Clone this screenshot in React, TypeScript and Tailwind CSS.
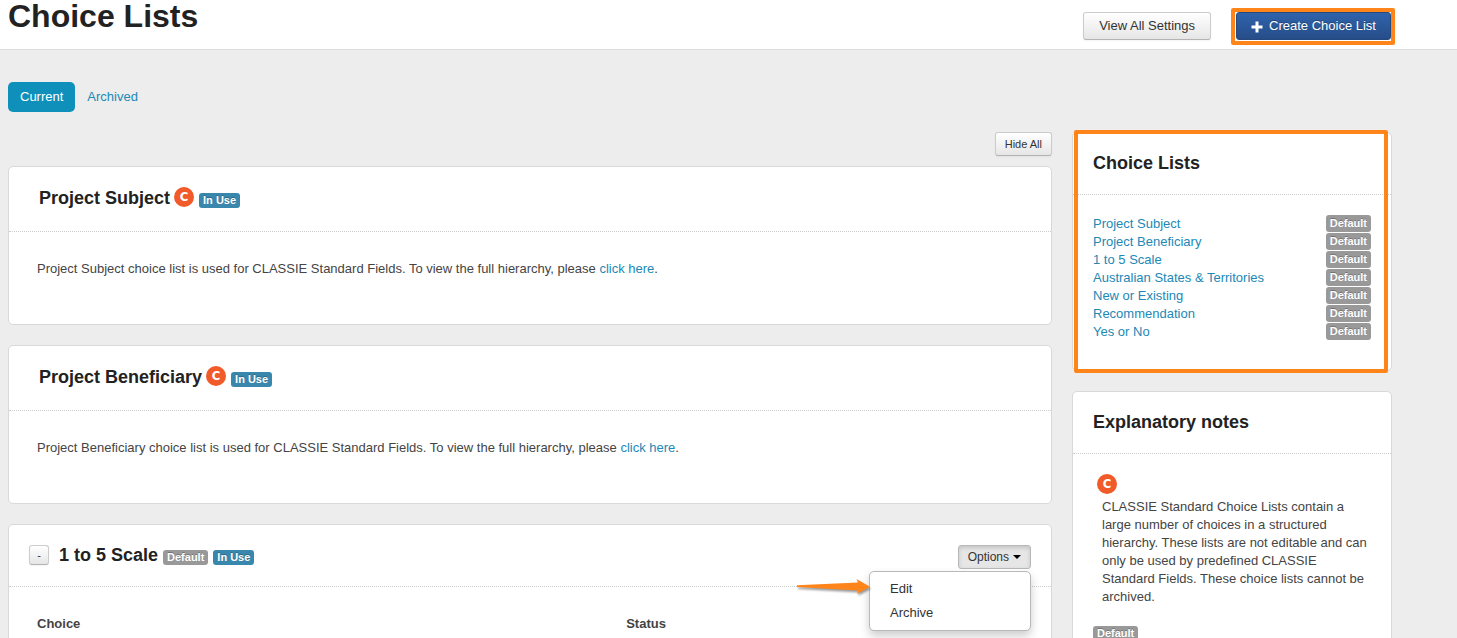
import { ReactNode } from 'react';
import clsx from 'clsx';

const choiceLists = [
  'Project Subject',
  'Project Beneficiary',
  '1 to 5 Scale',
  'Australian States & Territories',
  'New or Existing',
  'Recommendation',
  'Yes or No'
];

const linkClass = 'text-[#2288b5] hover:underline';
const buttonClass =
  'rounded-[3px] border border-[#ccc] border-b-[#b3b3b3] bg-linear-to-b from-white to-[#e6e6e6] text-[#333] shadow-xs';

function Badge({ tone = 'gray', className, children }: { tone?: 'gray' | 'blue'; className?: string; children: ReactNode }) {
  return (
    <span
      className={clsx(
        'inline-block rounded-[3px] px-1 text-[11px] font-bold text-white [text-shadow:0_-1px_0_rgba(0,0,0,0.25)]',
        tone === 'blue' ? 'bg-[#3a87ad]' : 'bg-[#999]',
        className ?? 'leading-[15px]'
      )}
    >
      {children}
    </span>
  );
}

function ClassieIcon() {
  return (
    <span className="flex size-5 items-center justify-center rounded-full bg-[#f15a29] font-['Liberation_Sans_Narrow','DejaVu_Sans_Condensed',sans-serif] text-[13px] leading-5 font-bold text-white">
      C
    </span>
  );
}

function Card({ children }: { children: ReactNode }) {
  return <section className="rounded-[5px] border border-[#d9d9d9] bg-white">{children}</section>;
}

function StandardList({ name }: { name: string }) {
  return (
    <Card>
      <div className="flex h-[65px] items-start gap-1 border-b border-dotted border-[#ccc] px-[30px] pt-5">
        <h3 className="text-lg leading-[22px] font-bold text-[#222]">{name}</h3>
        <ClassieIcon />
        <Badge tone="blue" className="mt-1.5 ml-px leading-[15px]">In Use</Badge>
      </div>
      <p className="px-7 pt-7 pb-[46px]">
        {name} choice list is used for CLASSIE Standard Fields. To view the full hierarchy, please{' '}
        <a href="#hierarchy" className={linkClass}>click here</a>.
      </p>
    </Card>
  );
}

function OptionsMenu() {
  return (
    <div className="relative ml-auto">
      <button
        type="button"
        aria-expanded="true"
        className="flex h-6 items-center gap-1 rounded-[3px] border border-[#b8b8b8] bg-[#e6e6e6] px-[9px] text-xs text-[#333] shadow-[inset_0_2px_4px_rgba(0,0,0,0.15)]"
      >
        Options
        <svg width="8" height="4" viewBox="0 0 8 4" aria-hidden="true">
          <path d="M0 0h8L4 4z" fill="#000" />
        </svg>
      </button>
      <div className="absolute top-full right-0 mt-0.5 w-[162px] rounded-[5px] border border-[#b8b8b8] bg-white py-[5px] text-[#333] shadow-[0_5px_10px_rgba(0,0,0,0.2)]">
        <a href="#edit" className="block px-5 leading-6">Edit</a>
        <a href="#archive" className="block px-5 leading-6">Archive</a>
        <svg
          className="absolute top-1.5 right-full drop-shadow-[1px_2px_1px_rgba(0,0,0,0.4)]"
          width="73"
          height="18"
          viewBox="0 0 73 18"
          aria-hidden="true"
        >
          <path d="M0 7.200 61 4.500 59.500 1 73 8.800 60 16 61.300 12.500 0 9z" fill="#ff851b" />
        </svg>
      </div>
    </div>
  );
}

function SidebarTitle({ children }: { children: ReactNode }) {
  return (
    <h3 className="border-b border-dotted border-[#ccc] px-5 py-5 text-lg leading-[21px] font-bold text-[#222]">
      {children}
    </h3>
  );
}

export default function App() {
  return (
    <div className="h-screen overflow-hidden bg-[#ededed] font-['Liberation_Sans',Arial,sans-serif] text-[13px] leading-[18px] text-[#444]">
      <header className="flex items-start border-b border-[#ddd] bg-white pr-[62px] pb-1 pl-2">
        <h1 className="text-[32px] leading-8 font-bold text-[#222]">Choice Lists</h1>
        <div className="ml-auto flex gap-5 pt-2">
          <button type="button" className={clsx(buttonClass, 'mt-1 h-7 px-[15px]')}>
            View All Settings
          </button>
          <div className="rounded-xs border-4 border-[#ff851b] pb-px pl-px">
            <button
              type="button"
              className="flex h-7 items-center gap-1.5 rounded-[3px] border border-[#24497f] bg-linear-to-b from-[#2f63ac] to-[#264d88] px-3.5 text-white [text-shadow:0_-1px_0_rgba(0,0,0,0.25)]"
            >
              <svg width="12" height="12" viewBox="0 0 12 12" className="mt-0.5" aria-hidden="true">
                <path d="M4.500 0.500h3v4h4v3h-4v4h-3v-4h-4v-3h4z" fill="#fff" />
              </svg>
              Create Choice List
            </button>
          </div>
        </div>
      </header>

      <main className="pt-8 pr-[65px] pl-2">
        <nav className="flex">
          <a href="#current" className="rounded-[5px] bg-[#0f90bb] px-3 py-1.5 text-white">Current</a>
          <a href="#archived" className="px-3 py-1.5 text-[#2288b5]">Archived</a>
        </nav>

        <div className="mt-5 flex items-start gap-5">
          <div className="min-w-0 flex-1">
            <div className="mb-2.5 flex justify-end">
              <button type="button" className={clsx(buttonClass, 'h-6 px-[9px] text-[11px]')}>
                Hide All
              </button>
            </div>
            <div className="space-y-5">
              <StandardList name="Project Subject" />
              <StandardList name="Project Beneficiary" />
              <Card>
                <div className="flex items-start border-b border-dotted border-[#ccc] px-5 pt-5 pb-[17px]">
                  <button
                    type="button"
                    aria-label="Collapse 1 to 5 Scale"
                    className={clsx(buttonClass, 'mr-2.5 size-5 text-[11px] leading-[18px]')}
                  >
                    -
                  </button>
                  <h3 className="mr-[5px] text-lg leading-5 font-bold text-[#222]">1 to 5 Scale</h3>
                  <div className="flex gap-[5px] pt-[5px]">
                    <Badge>Default</Badge>
                    <Badge tone="blue">In Use</Badge>
                  </div>
                  <OptionsMenu />
                </div>
                <div className="px-7 pt-7 pr-8 pb-7">
                  <table className="w-full text-left">
                    <thead>
                      <tr>
                        <th className="w-3/5 p-0 font-bold">Choice</th>
                        <th className="p-0 font-bold">Status</th>
                      </tr>
                    </thead>
                  </table>
                </div>
              </Card>
            </div>
          </div>

          <aside className="w-80 shrink-0 space-y-5">
            <div className="relative">
              <Card>
                <SidebarTitle>Choice Lists</SidebarTitle>
                <ul className="px-5 pt-5 pb-[29px]">
                  {choiceLists.map((name) => (
                    <li key={name} className="flex h-[18px] items-start justify-between">
                      <a href="#list" className={linkClass}>{name}</a>
                      <Badge className="leading-[17px]">Default</Badge>
                    </li>
                  ))}
                </ul>
              </Card>
              <div className="pointer-events-none absolute -top-0.5 right-1 -bottom-0.5 left-0.5 rounded-xs border-4 border-[#ff851b]" />
            </div>
            <Card>
              <SidebarTitle>Explanatory notes</SidebarTitle>
              <div className="p-5">
                <div className="ml-1">
                  <ClassieIcon />
                </div>
                <p className="mt-1 mb-5 ml-[9px]">
                  CLASSIE Standard Choice Lists contain a large number of choices in a structured hierarchy. These
                  lists are not editable and can only be used by predefined CLASSIE Standard Fields. These choice
                  lists cannot be archived.
                </p>
                <div className="flex">
                  <Badge>Default</Badge>
                </div>
              </div>
            </Card>
          </aside>
        </div>
      </main>
    </div>
  );
}
